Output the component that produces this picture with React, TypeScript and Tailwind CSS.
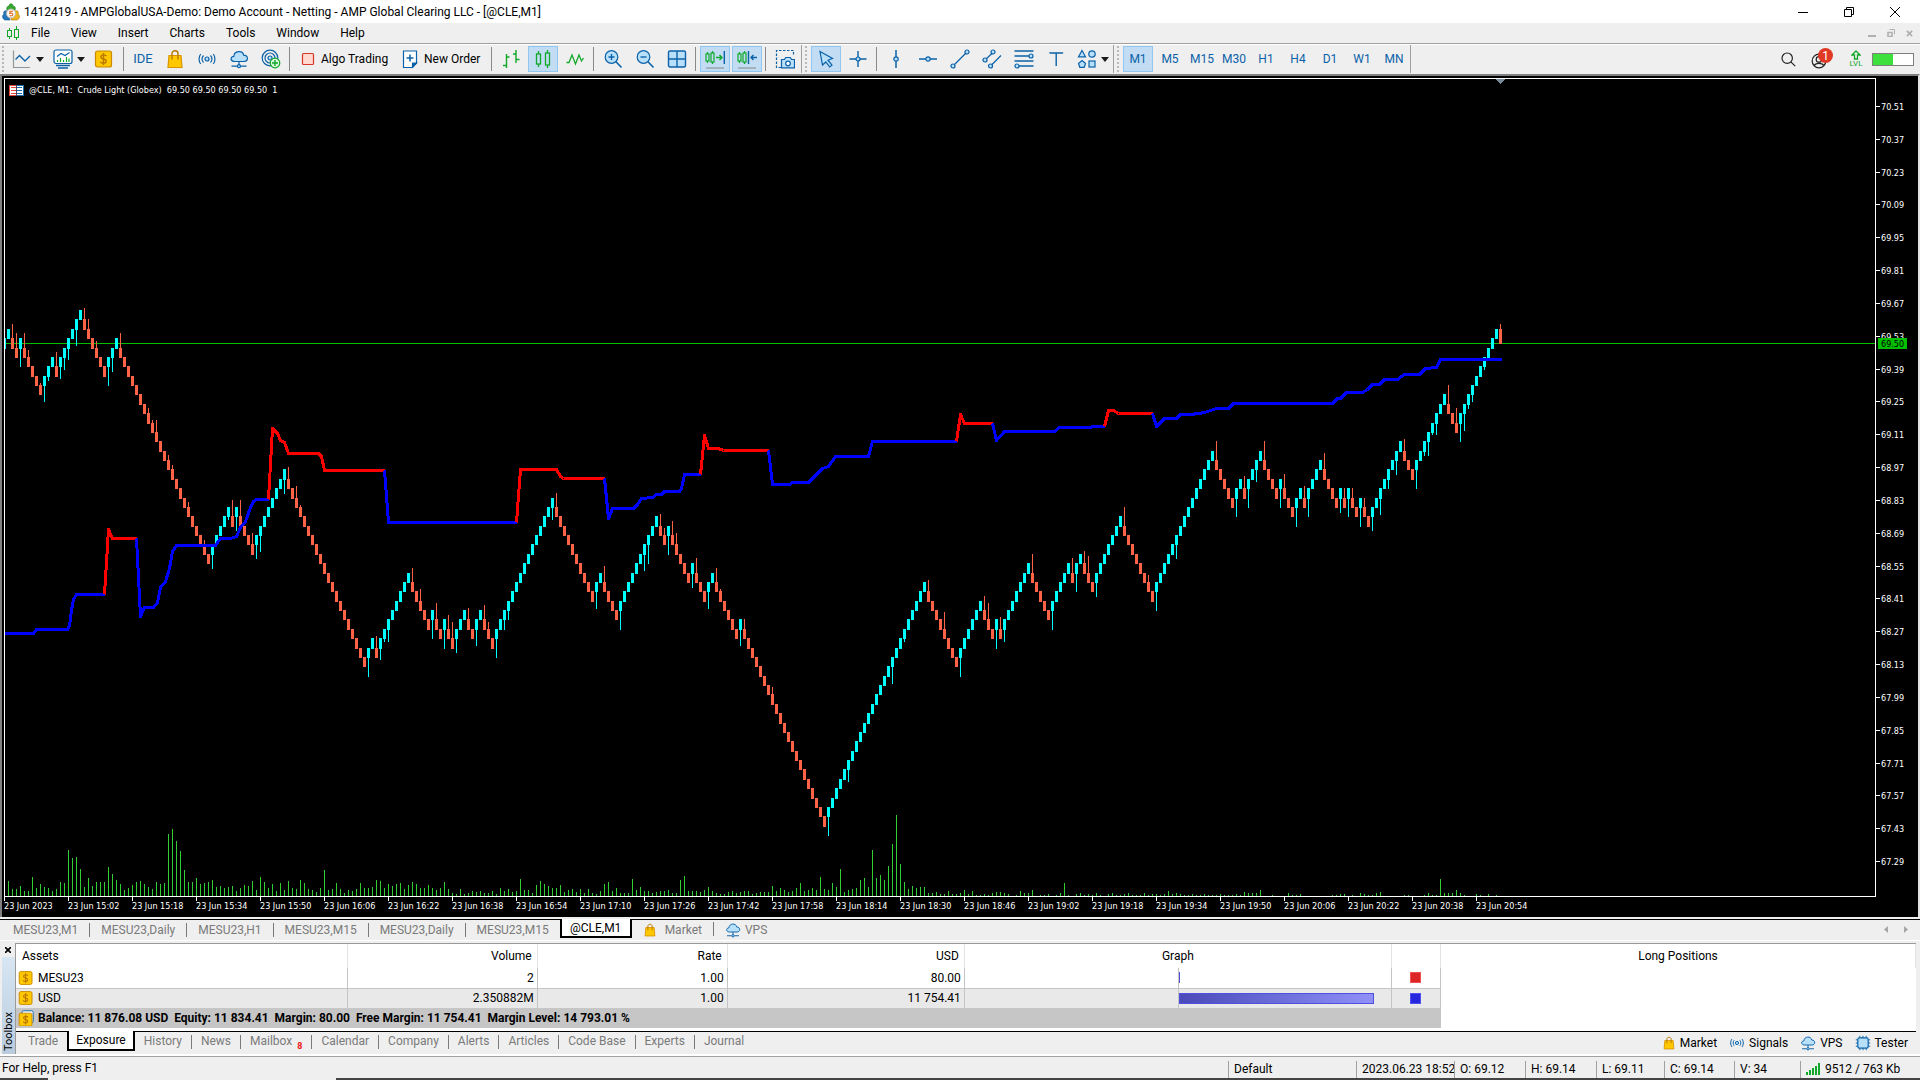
import type { ReactNode } from "react";
import { clsx } from "clsx";

const PLOT_LEFT = 5;
const PLOT_TOP = 79;
const BASELINE = 896;
const STEP = 4;

// Brick runs after the first candle: up, down, up, down...
const RUNS = [
  1, 2, 1, 5, 3, 1, 6, 6, 3, 23, 5, 1, 1, 4, 8, 20, 2, 1, 8, 5, 1, 2, 1, 2, 3, 2, 2, 3, 15, 10, 2, 4, 10, 2, 1, 5, 1, 3,
  2, 6, 1, 21, 25, 8, 6, 3, 1, 1, 7, 5, 5, 1, 2, 3, 7, 8, 15, 5, 2, 1, 4, 4, 1, 3, 2, 1, 4, 4, 1, 1, 1, 2, 1, 2, 8, 3, 8,
  3, 10,
];

// Where the wick of the candle at x ends.
const WICKS: Record<number, number> = {
  12: 324, 16: 333, 20: 367, 24: 333, 28: 350, 40: 383, 44: 402, 48: 381, 56: 352, 60: 379, 64: 370, 68: 360, 76: 346,
  84: 308, 88: 319, 96: 341, 108: 386, 112: 372, 120: 333, 148: 408, 152: 420, 156: 420, 168: 455, 172: 465, 188: 502,
  204: 540, 212: 569, 228: 520, 232: 500, 236: 531, 240: 500, 252: 533, 256: 559, 260: 552, 284: 494, 288: 467, 296: 486,
  300: 505, 368: 677, 376: 636, 380: 660, 384: 642, 388: 642, 412: 568, 420: 589, 432: 639, 436: 603, 444: 649, 448: 615,
  452: 622, 456: 653, 468: 608, 476: 646, 484: 605, 488: 622, 496: 658, 504: 630, 508: 620, 552: 520, 556: 493, 596: 609,
  604: 566, 620: 630, 644: 571, 648: 564, 660: 514, 664: 528, 668: 555, 672: 521, 676: 533, 692: 588, 696: 558, 708: 609,
  716: 568, 720: 589, 740: 646, 744: 619, 772: 687, 828: 836, 848: 782, 892: 684, 904: 642, 928: 580, 944: 612, 960: 677,
  984: 596, 988: 603, 996: 649, 1000: 617, 1004: 642, 1032: 554, 1052: 630, 1072: 558, 1076: 592, 1084: 551, 1088: 556,
  1096: 597, 1124: 507, 1148: 575, 1156: 611, 1176: 559, 1216: 441, 1236: 517, 1244: 476, 1248: 508, 1256: 482, 1264: 441,
  1280: 508, 1284: 474, 1296: 527, 1304: 486, 1308: 517, 1324: 453, 1340: 513, 1344: 488, 1348: 517, 1352: 488, 1360: 527,
  1364: 498, 1372: 531, 1380: 515, 1388: 489, 1396: 475, 1404: 439, 1416: 489, 1424: 456, 1428: 456, 1432: 435, 1436: 435,
  1448: 385, 1456: 408, 1460: 442, 1464: 431, 1468: 409, 1472: 402, 1484: 370,
};

const VOLUMES = [
  15, 7, 7, 10, 5, 5, 19, 8, 12, 9, 8, 5, 7, 14, 13, 46, 38, 39, 27, 9, 18, 10, 14, 14, 14, 29, 22, 16, 12, 6, 8, 11, 14,
  15, 12, 9, 7, 14, 12, 13, 62, 67, 55, 45, 26, 14, 14, 18, 12, 13, 14, 16, 9, 10, 8, 9, 10, 5, 8, 11, 10, 15, 6, 19, 14,
  8, 12, 5, 13, 6, 15, 8, 7, 16, 13, 7, 6, 4, 8, 26, 6, 7, 13, 7, 3, 6, 5, 7, 13, 8, 8, 9, 16, 15, 8, 12, 10, 12, 13, 7,
  11, 14, 12, 8, 8, 11, 8, 6, 8, 14, 7, 3, 2, 7, 2, 3, 5, 4, 5, 3, 3, 5, 2, 8, 5, 7, 4, 5, 17, 6, 6, 3, 11, 15, 12, 10,
  8, 8, 11, 4, 6, 7, 4, 7, 3, 7, 3, 2, 5, 12, 14, 5, 8, 3, 3, 3, 17, 6, 9, 5, 5, 3, 4, 5, 5, 6, 3, 3, 16, 20, 5, 5, 5, 4,
  6, 9, 5, 3, 2, 2, 4, 5, 3, 4, 5, 5, 2, 3, 4, 4, 4, 10, 5, 8, 6, 4, 5, 8, 13, 5, 6, 8, 6, 19, 7, 6, 13, 9, 27, 4, 6, 7,
  8, 16, 18, 9, 46, 18, 21, 16, 30, 52, 81, 32, 14, 7, 10, 8, 9, 9, 3, 3, 4, 2, 2, 5, 2, 2, 3, 6, 2, 5, 1, 1, 2, 1, 3, 4,
  4, 3, 2, 0, 1, 5, 3, 3, 6, 0, 1, 1, 2, 0, 1, 3, 13, 1, 0, 2, 3, 1, 2, 1, 3, 1, 0, 2, 3, 1, 1, 2, 3, 1, 1, 1, 3, 1, 2,
  2, 1, 2, 5, 2, 3, 2, 1, 1, 2, 1, 1, 2, 1, 1, 1, 2, 1, 1, 1, 2, 1, 4, 3, 3, 3, 6, 0, 0, 1, 0, 0, 0, 3, 1, 1, 2, 0, 0,
  0, 0, 0, 0, 0, 1, 1, 2, 2, 0, 1, 0, 3, 2, 1, 1, 3, 4, 0, 0, 0, 0, 0, 1, 1, 0, 0, 0, 1, 3, 1, 1, 17, 3, 3, 3, 6, 3, 1,
  0, 0, 2, 1, 0, 2, 0, 1,
];

const TREND: { color: string; points: string }[] = [
  { color: "#0000ff", points: "4,633 33,633 36,629 67,629 69,625 71,610 73,599 76,594 104,594" },
  { color: "#ff0000", points: "104,594 108,529 112,538 136,538" },
  {
    color: "#0000ff",
    points:
      "136,538 140,616 144,607 153,607 157,602 160,587 165,581 169,568 172,551 176,545 215,545 220,538 230,538 236,536 240,527 245,521 250,507 253,501 256,499 268,499",
  },
  { color: "#ff0000", points: "268,499 272,428 277,433 280,440 284,442 288,453 318,453 321,456 324,470 384,470" },
  { color: "#0000ff", points: "384,470 388,522 516,522" },
  { color: "#ff0000", points: "516,522 520,469 556,469 560,476 563,478 604,478" },
  {
    color: "#0000ff",
    points:
      "604,478 608,518 612,508 633,508 637,504 641,498 652,497 656,494 661,494 664,491 679,491 681,488 684,474 700,474",
  },
  { color: "#ff0000", points: "700,474 704,435 708,448 718,448 723,450 768,450" },
  {
    color: "#0000ff",
    points: "768,450 772,484 789,484 792,482 808,482 812,478 822,468 828,466 835,456 868,456 872,441 956,441",
  },
  { color: "#ff0000", points: "956,441 960,414 964,423 992,423" },
  { color: "#0000ff", points: "992,423 996,440 1004,431 1054,431 1059,427 1090,427 1092,426 1104,426" },
  { color: "#ff0000", points: "1104,426 1108,410 1113,410 1118,413 1152,413" },
  {
    color: "#0000ff",
    points:
      "1152,413 1156,426 1164,418 1176,418 1180,414 1190,414 1198,413 1204,412 1210,410 1216,408 1228,408 1233,403 1332,403 1337,398 1340,398 1346,392 1362,392 1367,389 1372,384 1379,384 1384,379 1397,379 1404,374 1419,374 1425,368 1436,367 1440,359 1501,359",
  },
];

const levelY = (level: number) => Math.round(310 + 9.376 * level);

const CANDLES = (() => {
  const out = [{ x: STEP, level: 3, up: true }];
  let level = 3;
  let x = STEP;
  RUNS.forEach((count, i) => {
    const up = i % 2 === 0;
    for (let n = 0; n < count; n++) {
      x += STEP;
      level += up ? -1 : 1;
      out.push({ x, level, up });
    }
  });
  return out;
})();

const PRICES = Array.from({ length: 24 }, (_, i) => ({
  label: (70.51 - i * 0.14).toFixed(2),
  y: Math.round(106 + i * 32.83),
}));

const TIMES = Array.from({ length: 24 }, (_, i) => {
  if (i === 0) return "23 Jun 2023";
  const minutes = 15 * 60 + 2 + (i - 1) * 16;
  return `23 Jun ${Math.floor(minutes / 60)}:${String(minutes % 60).padStart(2, "0")}`;
});

/* ---------- icons ---------- */

const BLUE = "#0b62a8";
const SKY = "#b9e0fb";
const GREEN = "#12a82a";

function Icon({ children, className = "size-5" }: { children: ReactNode; className?: string }) {
  return (
    <svg viewBox="0 0 20 20" className={clsx("shrink-0", className)} fill="none" stroke={BLUE} strokeWidth="1.2" aria-hidden="true">
      {children}
    </svg>
  );
}

function Caret() {
  return (
    <svg viewBox="0 0 8 5" className="h-[5px] w-2 shrink-0" aria-hidden="true">
      <path d="M0 0h8L4 5z" fill="#1a1a1a" />
    </svg>
  );
}

function LogoIcon() {
  return (
    <svg viewBox="0 0 18 18" className="size-[18px] shrink-0" aria-hidden="true">
      <path d="M5 7c-1-3 1-4 2-4 0-3 4-3 4 0 2 0 3 2 2 4z" fill="#36a832" stroke="#1f7d22" strokeWidth=".6" />
      <path d="M6 8C2 7 1 9 2 11c-2 1-2 5 1 6h5z" fill="#2478bd" stroke="#14538a" strokeWidth=".6" />
      <path d="M12 8c4-1 5 1 4 3 2 1 2 5-1 6h-6z" fill="#f0b41c" stroke="#a87508" strokeWidth=".6" />
      <circle cx="9" cy="10.500" r="4.500" fill="#fff" stroke="#b9b2a4" />
      <path d="M11 8.200H8l-.3 2.200c2-.6 3.300 0 3.100 1.200-.2 1.300-2 1.600-3.200.8" fill="none" stroke="#e06a1c" strokeWidth="1.100" />
    </svg>
  );
}

function CandleIcon({ className }: { className?: string }) {
  return (
    <Icon className={className}>
      <g stroke={GREEN} strokeWidth="1.300">
        <path d="M5.500 2v3M5.500 15v3M14.500 1v3M14.500 16v3" />
        <rect x="3.500" y="5" width="4" height="10" />
        <rect x="12.500" y="4" width="4" height="12" />
      </g>
    </Icon>
  );
}

function MenuCandles() {
  return (
    <svg viewBox="0 0 14 15" className="mr-[5px] ml-[6px] h-[15px] w-[14px]" fill="none" stroke={GREEN} aria-hidden="true">
      <path d="M3.500 2v2M3.500 11v2M10.500 0v3M10.500 12v2" />
      <rect x="1.500" y="4.500" width="4" height="6" />
      <rect x="8.500" y="3.500" width="4" height="8" />
    </svg>
  );
}

function DollarIcon({ className, stacked = false }: { className?: string; stacked?: boolean }) {
  return (
    <Icon className={className}>
      {stacked && <rect x="5" y="1" width="14" height="15" rx="2" fill="#fff" />}
      <rect x="1.500" y={stacked ? 4 : 2} width="16" height="16" rx="2" fill="#ffc800" stroke="#c98a00" />
      <g transform={stacked ? "translate(0 2)" : undefined} stroke="#b87800" strokeWidth="1.400">
        <path d="M12.500 7.200c-.6-1-1.600-1.300-3-1.300-3.300 0-3.600 3.500 0 4.100 3.800.6 3.400 4.200 0 4.200-1.500 0-2.600-.5-3.100-1.500M9.500 4v12" />
      </g>
    </Icon>
  );
}

function BagIcon({ className }: { className?: string }) {
  return (
    <Icon className={className}>
      <path d="M4 6.500h12l1 12H3z" fill="#ffc800" stroke="#d99400" />
      <path d="M7 10.500V4.500c0-3.600 6-3.600 6 0v6" stroke="#b87800" strokeWidth="1.400" />
    </Icon>
  );
}

function SignalIcon({ className }: { className?: string }) {
  return (
    <Icon className={className}>
      <circle cx="10" cy="10" r="2" fill={SKY} />
      <path d="M6.500 6.500c-1.700 2-1.700 5 0 7M13.500 6.500c1.700 2 1.700 5 0 7M3.700 5c-2.200 2.800-2.200 7.200 0 10M16.300 5c2.200 2.800 2.200 7.200 0 10" />
    </Icon>
  );
}

function CloudIcon({ className }: { className?: string }) {
  return (
    <Icon className={className}>
      <path d="M5.500 12.500c-4.500-.2-4.500-5-.6-5.200C5 1.500 14 1 14.600 6.200c5 .2 5 6 .6 6.300z" fill={SKY} />
      <path d="M10 12.500V16M2.500 17.200h5.700M11.800 17.200h5.700" />
      <circle cx="10" cy="17.200" r="1.500" fill={SKY} />
    </Icon>
  );
}

function RadarIcon() {
  return (
    <Icon>
      <circle cx="9" cy="9" r="7.800" />
      <circle cx="9" cy="9" r="5" />
      <circle cx="9" cy="9" r="2" fill={SKY} />
      <circle cx="14" cy="14" r="4.800" fill="#d9f7dc" stroke={GREEN} />
      <path d="M14 11v6M11 14h6" stroke={GREEN} strokeWidth="1.400" />
    </Icon>
  );
}

function MagnifierIcon({ plus = false }: { plus?: boolean }) {
  return (
    <Icon>
      <circle cx="8.500" cy="8" r="6.300" fill={SKY} />
      <path d="M13 12.700l5.500 5.800" strokeWidth="1.600" />
      <path d={plus ? "M5.500 8h6M8.500 5v6" : "M5.500 8h6"} strokeWidth="1.400" />
    </Icon>
  );
}

function ScrollIcon({ shift = false }: { shift?: boolean }) {
  return (
    <Icon>
      <g stroke={GREEN}>
        <path d="M2.500 3v2M2.500 12v2M7.500 2v2M7.500 13v2" />
        <rect x="1" y="5" width="3" height="7" />
        <rect x="6" y="4" width="3" height="9" />
        {!shift && <path d="M11 8.500h6M14.500 6l2.500 2.500-2.500 2.500" strokeWidth="1.400" />}
      </g>
      {shift ? (
        <path d="M11.500 2v13M20 8.500h-6M16.500 6L14 8.500l2.500 2.500" strokeWidth="1.400" />
      ) : (
        <path d="M19.300 2v13" strokeWidth="1.400" />
      )}
      <path d="M1 19h18" stroke="#8f969c" />
    </Icon>
  );
}

function TesterIcon() {
  return (
    <Icon className="size-4">
      <path d="M6 1v18M10 1v18M14 1v18M1 6h18M1 10h18M1 14h18" />
      <rect x="3.500" y="3.500" width="13" height="13" rx="2" fill={SKY} strokeWidth="1.500" />
    </Icon>
  );
}

/* ---------- toolbar ---------- */

function ToolButton({ label, active = false, children }: { label: string; active?: boolean; children: ReactNode }) {
  return (
    <button
      type="button"
      aria-label={label}
      aria-pressed={active}
      className={clsx(
        "flex h-[26px] w-[30px] shrink-0 items-center justify-center border text-[#0b62a8]",
        active ? "border-[#8fc6f2] bg-[#c1dcf3]" : "border-transparent",
      )}
    >
      {children}
    </button>
  );
}

function Separator() {
  return <div className="mr-1 ml-[3px] h-6 w-px shrink-0 bg-[#8a8a8a]" />;
}

function GroupEdge() {
  return (
    <div className="flex h-full w-[11px] shrink-0 items-center gap-[3px] pl-px">
      <div className="h-full w-px bg-[#a0a0a0]" />
      <Grip />
    </div>
  );
}

function Grip() {
  return <div className="h-[26px] border-l-2 border-dotted border-[#b8b8b8]" />;
}

const TIMEFRAMES = ["M1", "M5", "M15", "M30", "H1", "H4", "D1", "W1", "MN"];

function Toolbar() {
  return (
    <div className="flex h-[29px] items-center overflow-hidden border-t border-white bg-[#efefef]">
      <div className="w-[6px] shrink-0 pl-[2px]">
        <Grip />
      </div>
      <button type="button" aria-label="Chart type" className="flex w-[41px] shrink-0 items-center gap-1 pl-[6px]">
        <Icon>
          <path d="M1.500 1.500v17H18" stroke="#8f969c" />
          <path d="M3.500 10.500l4-4 5.500 5.500 5-5" strokeWidth="1.400" />
        </Icon>
        <Caret />
      </button>
      <button type="button" aria-label="Indicators" className="flex w-[41px] shrink-0 items-center gap-1 pl-[6px]">
        <Icon>
          <path d="M3 16.500h14M5 19h10" strokeWidth="1.400" />
          <rect x="1" y="1" width="18" height="13.500" rx="2" fill="#fff" />
          <path d="M4 7.500l4-3 4 2 4.500-3" />
          <path d="M4.500 13v-2M7.500 13V9M10.500 13v-2M13.500 13V8M16 13V9.500" stroke={GREEN} />
        </Icon>
        <Caret />
      </button>
      <button type="button" aria-label="Quotes" className="flex w-8 shrink-0 items-center justify-center">
        <DollarIcon />
      </button>
      <Separator />
      <div className="flex gap-[2px]">
        <ToolButton label="IDE">
          <span className="text-[13px]">IDE</span>
        </ToolButton>
        <ToolButton label="Market"><BagIcon /></ToolButton>
        <ToolButton label="Signals"><SignalIcon /></ToolButton>
        <ToolButton label="VPS"><CloudIcon /></ToolButton>
        <ToolButton label="Copy trading"><RadarIcon /></ToolButton>
      </div>
      <Separator />
      <button type="button" className="flex w-[101px] shrink-0 items-center gap-[3px] pl-1">
        <Icon>
          <rect x="4.500" y="4.500" width="11" height="11" rx="1" fill="#ffd9cf" stroke="#d8382c" />
        </Icon>
        Algo Trading
      </button>
      <button type="button" className="flex w-[93px] shrink-0 items-center gap-1 pl-[5px]">
        <Icon>
          <path d="M3.500 2h13v12l-4 4.500h-9z" fill="#fff" />
          <path d="M12.500 18v-4h4z" fill={BLUE} />
          <path d="M6.500 9h7M10 5.500v7" strokeWidth="1.500" />
        </Icon>
        New Order
      </button>
      <Separator />
      <div className="flex gap-[2px]">
        <ToolButton label="Bar chart">
          <Icon>
            <path d="M5.500 5v14M2 16.500h3.500M5.500 8h3M15 1v13M12 5h3M15 10.500h3.500" stroke={GREEN} strokeWidth="1.400" />
          </Icon>
        </ToolButton>
        <ToolButton label="Candlesticks" active><CandleIcon /></ToolButton>
        <ToolButton label="Line chart">
          <Icon>
            <path d="M1.500 13.500H4L7 6l3.500 9L14 6l2.500 6 2-3" stroke={GREEN} strokeWidth="1.300" />
          </Icon>
        </ToolButton>
      </div>
      <Separator />
      <div className="flex gap-[2px]">
        <ToolButton label="Zoom in"><MagnifierIcon plus /></ToolButton>
        <ToolButton label="Zoom out"><MagnifierIcon /></ToolButton>
        <ToolButton label="Tile windows">
          <Icon>
            <rect x="1.500" y="2" width="17" height="16" rx="1.500" fill={SKY} strokeWidth="1.400" />
            <path d="M10 2v16M1.500 10h17" strokeWidth="1.400" />
          </Icon>
        </ToolButton>
      </div>
      <Separator />
      <div className="flex gap-[2px]">
        <ToolButton label="Auto scroll" active><ScrollIcon /></ToolButton>
        <ToolButton label="Chart shift" active><ScrollIcon shift /></ToolButton>
      </div>
      <Separator />
      <ToolButton label="Screenshot">
        <Icon>
          <path d="M6 18.500H1.500v-17h17V7" strokeDasharray="2.500 1.500" />
          <path d="M6.500 10.500h3l1.200-2h4.600l1.200 2h3v8.300h-13z" fill={SKY} />
          <circle cx="13" cy="14.500" r="2.300" fill="#fff" />
        </Icon>
      </ToolButton>
      <GroupEdge />
      <div className="flex gap-[2px]">
        <ToolButton label="Cursor" active>
          <Icon>
            <path d="M4 2.500l12.500 7-4.500 1.700 4 5-2.300 1.800-3.800-5L6.500 16z" fill={SKY} />
          </Icon>
        </ToolButton>
        <ToolButton label="Crosshair">
          <Icon>
            <path d="M10 2v16M1.500 10h17" strokeWidth="1.400" />
            <circle cx="10" cy="10" r="2" fill={SKY} />
          </Icon>
        </ToolButton>
      </div>
      <Separator />
      <div className="flex gap-[2px]">
        <ToolButton label="Vertical line">
          <Icon>
            <path d="M10 1v18" strokeWidth="1.500" />
            <circle cx="10" cy="10" r="2.200" fill={SKY} />
          </Icon>
        </ToolButton>
        <ToolButton label="Horizontal line">
          <Icon>
            <path d="M1 10h18" strokeWidth="1.500" />
            <circle cx="10" cy="10" r="2.200" fill={SKY} />
          </Icon>
        </ToolButton>
        <ToolButton label="Trend line">
          <Icon>
            <path d="M3 17L17 3" />
            <circle cx="3" cy="17" r="2" fill={SKY} />
            <circle cx="17" cy="3" r="2" fill={SKY} />
          </Icon>
        </ToolButton>
        <ToolButton label="Channel">
          <Icon>
            <path d="M3 11l8.500-8M8.500 17L19 6.500" />
            <circle cx="3" cy="11" r="2" fill={SKY} />
            <circle cx="11" cy="3" r="2" fill={SKY} />
            <circle cx="8.500" cy="17" r="2" fill={SKY} />
          </Icon>
        </ToolButton>
        <ToolButton label="Fibonacci">
          <Icon>
            <path d="M.500 2h19M.500 7h15M.500 12h19M5 17h14.500" strokeWidth="1.400" />
            <circle cx="17" cy="7" r="2" fill={SKY} />
            <circle cx="3" cy="17" r="2" fill={SKY} />
          </Icon>
        </ToolButton>
        <ToolButton label="Text">
          <Icon>
            <path d="M4 4.500V4h12.500v.5M10.200 4v13" strokeWidth="1.400" />
          </Icon>
        </ToolButton>
        <button type="button" aria-label="Shapes" className="flex w-[39px] shrink-0 items-center gap-1 pl-1">
          <Icon>
            <path d="M5 1.500l3.500 6.300h-7z" fill={SKY} />
            <circle cx="15" cy="5" r="3.200" fill={SKY} />
            <path d="M5 11.500l3.500 3-1.300 3.800H2.800l-1.300-3.800z" fill={SKY} />
            <rect x="12" y="12" width="6" height="6" fill={SKY} />
          </Icon>
          <Caret />
        </button>
      </div>
      <GroupEdge />
      <div className="flex gap-[2px]">
        {TIMEFRAMES.map((tf) => (
          <ToolButton key={tf} label={tf} active={tf === "M1"}>
            {tf}
          </ToolButton>
        ))}
      </div>
      <div className="ml-px h-full w-px shrink-0 bg-[#a0a0a0]" />
      <div className="ml-auto flex items-center gap-2 pr-[6px]">
        <button type="button" aria-label="Search" className="flex w-[30px] justify-center">
          <Icon className="size-4">
            <g stroke="#222" strokeWidth="1.500">
              <circle cx="9" cy="9" r="6.500" />
              <path d="M13.500 13.500L19 19" />
            </g>
          </Icon>
        </button>
        <button type="button" aria-label="Account" className="relative h-6 w-[29px]">
          <Icon className="mt-1 size-4">
            <g stroke="#222" strokeWidth="1.500">
              <circle cx="10" cy="10" r="8.500" />
              <circle cx="10" cy="8" r="3.500" />
              <path d="M4 16c1.500-4 10.500-4 12 0" />
            </g>
          </Icon>
          <span className="absolute top-px left-[7px] flex size-[15px] items-center justify-center rounded-full bg-[#e03a24] text-[12px] text-white">
            1
          </span>
        </button>
        <div className="flex w-4 flex-col items-center text-[#12a82a]">
          <svg viewBox="0 0 10 10" className="size-[10px]" fill="none" stroke={GREEN} strokeWidth="1.300" aria-hidden="true">
            <path d="M5 1l4 4H6.500v4h-3V5H1z" />
          </svg>
          <span className="text-[8px] leading-[8px]">LVL</span>
        </div>
        <div className="h-[13px] w-[42px] border border-[#7f7f7f] bg-white">
          <div className="h-full w-5 bg-[#3ee03e]" />
        </div>
      </div>
    </div>
  );
}

/* ---------- chart ---------- */

function Plot() {
  return (
    <div className="relative min-w-0 flex-1 border border-white">
      <div className="absolute top-[4px] left-1 flex items-center gap-[5px] font-['DejaVu_Sans_Condensed','DejaVu_Sans',sans-serif] text-[9px] leading-[14px] whitespace-pre text-white">
        <svg viewBox="0 0 15 11" className="h-[11px] w-[15px]" aria-hidden="true">
          <path d="M0 0h7.500v11H0z" fill="#e0443a" />
          <path d="M7.500 0H15v11H7.500z" fill="#1769aa" />
          <path d="M1 1h6v9H1zM8 1h6v9H8z" fill="#fff" />
          <path d="M2 2.500h5M2 5.500h5M2 8.500h5" stroke="#e0443a" />
          <path d="M8 2.500h5M8 5.500h5M8 8.500h5" stroke="#1769aa" />
        </svg>
        {"@CLE, M1:  Crude Light (Globex)  69.50 69.50 69.50 69.50  1"}
      </div>
      <svg className="block h-[817px] w-full" shapeRendering="crispEdges" role="img" aria-label="@CLE, M1 price and volume">
        <line x1="0" x2="100%" y1="264.500" y2="264.500" stroke="#00c000" />
        <g transform={`translate(${-PLOT_LEFT} ${-PLOT_TOP})`}>
          <path d="M1495 79h11l-5.500 5z" fill="#778899" />
          {VOLUMES.map((h, i) => (
            <rect key={i} x={8 + i * STEP} y={BASELINE - h} width="1" height={h} fill="#32cd32" />
          ))}
          {CANDLES.map(({ x, level, up }) => {
            const top = levelY(level);
            const bottom = levelY(level + 1) + 1;
            const wick = WICKS[x];
            return (
              <g key={x} fill={up ? "#00ffff" : "#ff6347"}>
                <rect x={x - 1} y={top} width="3" height={bottom - top} />
                {wick && <rect x={x} y={up ? bottom : wick} width="1" height={up ? wick - bottom : top - wick} />}
              </g>
            );
          })}
          <path d="M1499 329h3v15h-3zM1500 324h1v5h-1z" fill="#ff6347" />
          <g transform="translate(0.5 0.5)" fill="none" strokeWidth="3" strokeLinejoin="round">
            {TREND.map((seg, i) => (
              <polyline key={i} points={seg.points} stroke={seg.color} />
            ))}
          </g>
        </g>
      </svg>
    </div>
  );
}

function PriceAxis() {
  return (
    <svg className="h-[819px] w-[42px] shrink-0 font-['DejaVu_Sans_Condensed','DejaVu_Sans',sans-serif] text-[9px]" aria-label="Price scale">
      <g transform="translate(0 -78)" fill="#fff">
        {PRICES.map(({ label, y }) => (
          <g key={label}>
            <rect x="0" y={y} width="4" height="1" />
            <text x="5" y={y + 4}>{label}</text>
          </g>
        ))}
        <rect x="2" y="338" width="29" height="11" fill="#00c000" />
        <text x="5" y="347" fill="#000">69.50</text>
      </g>
    </svg>
  );
}

function Chart() {
  return (
    <div className="border-t-2 border-r-2 border-l-2 border-t-[#808080] border-r-[#e3e3e3] border-l-[#808080] bg-black pt-[2px] pl-[2px]">
      <div className="flex">
        <Plot />
        <PriceAxis />
      </div>
      <div className="flex h-5 overflow-hidden font-['DejaVu_Sans_Condensed','DejaVu_Sans',sans-serif] text-[9px] leading-[10px] text-white">
        {TIMES.map((t) => (
          <div key={t} className="w-16 shrink-0 whitespace-nowrap">
            <div className="h-1 w-px bg-white" />
            {t}
          </div>
        ))}
      </div>
    </div>
  );
}

const CHART_TABS = ["MESU23,M1", "MESU23,Daily", "MESU23,H1", "MESU23,M15", "MESU23,Daily", "MESU23,M15"];

function ChartTabs() {
  return (
    <div className="mt-[2px] flex h-5 items-start border-t border-black pl-[2px] text-[#7a7a7a]">
      {CHART_TABS.map((tab, i) => (
        <div key={i} className="flex items-center">
          <button type="button" className="h-[19px] px-[11px]">{tab}</button>
          {i < CHART_TABS.length - 1 && <div className="h-[14px] w-px bg-[#7a7a7a]" />}
        </div>
      ))}
      <button type="button" className="-mt-px h-[19px] w-[72px] border-2 border-t-0 border-black bg-white text-black">@CLE,M1</button>
      <button type="button" className="flex h-[19px] items-center gap-2 px-[11px]">
        <BagIcon className="size-[14px]" />
        Market
      </button>
      <div className="mt-[2px] h-[14px] w-px bg-[#7a7a7a]" />
      <button type="button" className="flex h-[19px] items-center gap-1 px-[11px]">
        <CloudIcon className="size-4" />
        VPS
      </button>
      <div className="ml-auto flex h-[19px] items-center gap-4 pr-3">
        <button type="button" aria-label="Scroll tabs left">
          <svg viewBox="0 0 4 7" className="h-[7px] w-1" aria-hidden="true"><path d="M4 0v7L0 3.500z" fill="#a6a6a6" /></svg>
        </button>
        <button type="button" aria-label="Scroll tabs right">
          <svg viewBox="0 0 4 7" className="h-[7px] w-1" aria-hidden="true"><path d="M0 0v7l4-3.500z" fill="#a6a6a6" /></svg>
        </button>
      </div>
    </div>
  );
}

/* ---------- toolbox ---------- */

const ASSETS = [
  { name: "MESU23", volume: "2", rate: "1.00", usd: "80.00", bar: 1, dot: "bg-[#dc2626] border-[#f05050]" },
  { name: "USD", volume: "2.350882M", rate: "1.00", usd: "11 754.41", bar: 195, dot: "bg-[#2626dc] border-[#5050f0]" },
];

const TOOLBOX_TABS = [
  "Trade", "Exposure", "History", "News", "Mailbox", "Calendar", "Company", "Alerts", "Articles", "Code Base", "Experts", "Journal",
];

function ExposureTable() {
  return (
    <table className="w-3/4 table-fixed border-collapse">
      <colgroup>
        <col className="w-[331px]" />
        <col className="w-[190px]" />
        <col className="w-[190px]" />
        <col className="w-[237px]" />
        <col className="w-[214px]" />
        <col className="w-[213px]" />
        <col className="w-[49px]" />
      </colgroup>
      <thead>
        <tr className="h-6 [&>th]:border-r [&>th]:border-[#e4e4e4] [&>th]:p-0 [&>th]:font-normal">
          <th scope="col" className="text-left"><span className="pl-[6px]">Assets</span></th>
          <th scope="col" className="text-right"><span className="pr-[5px]">Volume</span></th>
          <th scope="col" className="text-right"><span className="pr-[5px]">Rate</span></th>
          <th scope="col" className="text-right"><span className="pr-[5px]">USD</span></th>
          <th scope="col" colSpan={2}>Graph</th>
          <th scope="col" aria-label="Color" />
        </tr>
      </thead>
      <tbody>
        {ASSETS.map((asset, i) => (
          <tr
            key={asset.name}
            className={clsx("h-5 [&>td]:border-r [&>td]:border-[#c4c4c4] [&>td]:p-0", i === 0 ? "border-b border-[#c4c4c4]" : "bg-[#e9e9e9]")}
          >
            <td>
              <div className="flex items-center gap-1 pl-[2px]">
                <DollarIcon className="size-4" />
                {asset.name}
              </div>
            </td>
            <td className="text-right"><span className="pr-[3px]">{asset.volume}</span></td>
            <td className="text-right"><span className="pr-[3px]">{asset.rate}</span></td>
            <td className="text-right"><span className="pr-[3px]">{asset.usd}</span></td>
            <td />
            <td>
              {asset.bar > 1 ? (
                <div
                  className="h-[11px] border border-[#5050e0] bg-linear-to-r from-[#4a4ab8] to-[#9090f8]"
                  style={{ width: asset.bar }}
                />
              ) : (
                <div className="h-[11px] w-px bg-[#5050e0]" />
              )}
            </td>
            <td><div className={clsx("mx-auto size-[11px] border", asset.dot)} /></td>
          </tr>
        ))}
        <tr className="h-5 bg-[#c6c6c6]">
          <td colSpan={7} className="p-0 font-bold">
            <div className="flex items-center gap-1 pl-[2px] whitespace-pre">
              <DollarIcon className="size-4" stacked />
              {"Balance: 11 876.08 USD  Equity: 11 834.41  Margin: 80.00  Free Margin: 11 754.41  Margin Level: 14 793.01 %"}
            </div>
          </td>
        </tr>
      </tbody>
    </table>
  );
}

function ToolboxTabs() {
  return (
    <div className="flex h-[22px] items-start border-t border-black pl-[3px] text-[#7a7a7a]">
      {TOOLBOX_TABS.map((tab, i) => {
        const active = tab === "Exposure";
        return (
          <div key={tab} className="flex items-start">
            <button
              type="button"
              className={clsx(
                "leading-[16px]",
                active ? "-mt-px h-5 border-2 border-t-0 border-black bg-white px-[7px] text-black" : "h-[18px] px-[9px]",
              )}
            >
              {tab}
              {tab === "Mailbox" && (
                <span className="relative top-1 ml-[5px] text-[9px] leading-none font-bold text-[#f01818]">8</span>
              )}
            </button>
            {i > 1 && i < TOOLBOX_TABS.length - 1 && <div className="mt-[3px] h-[14px] w-px bg-[#7a7a7a]" />}
          </div>
        );
      })}
      <div className="ml-auto flex items-center gap-3 pt-[3px] pr-2 text-black [&>a]:flex [&>a]:items-center [&>a]:gap-1">
        <a href="#market"><BagIcon className="size-[14px]" />Market</a>
        <a href="#signals"><SignalIcon className="size-4" />Signals</a>
        <a href="#vps"><CloudIcon className="size-4" />VPS</a>
        <a href="#tester"><TesterIcon />Tester</a>
      </div>
    </div>
  );
}

function Toolbox() {
  return (
    <div className="mt-[2px] flex h-[111px]">
      <div className="flex w-[15px] shrink-0 flex-col items-center pl-px">
        <button type="button" aria-label="Close toolbox" className="flex h-[14px] w-full items-center justify-center">
          <svg viewBox="0 0 6 6" className="size-[6px]" aria-hidden="true">
            <path d="M0 0l6 6M6 0L0 6" stroke="#000" strokeWidth="1.600" />
          </svg>
        </button>
        <div className="flex w-[13px] flex-1 flex-col items-center justify-end bg-linear-to-b from-[#d8e6f3] to-[#b9cbdd] pb-[3px]">
          <span className="rotate-180 text-[11px] leading-[13px] [writing-mode:vertical-rl]">Toolbox</span>
        </div>
      </div>
      <div className="mr-1 flex min-w-0 flex-1 flex-col border-t border-l border-[#9a9a9a]">
        <div className="flex h-[87px] items-start bg-white">
          <ExposureTable />
          <div className="flex h-6 flex-1 items-center justify-center border-r border-[#e4e4e4]">Long Positions</div>
        </div>
        <ToolboxTabs />
      </div>
    </div>
  );
}

/* ---------- window ---------- */

const MENU = ["File", "View", "Insert", "Charts", "Tools", "Window", "Help"];

const STATUS = [
  { text: "Default", width: "w-[128px]" },
  { text: "2023.06.23 18:52", width: "w-[98px]" },
  { text: "O: 69.12", width: "w-[71px]" },
  { text: "H: 69.14", width: "w-[71px]" },
  { text: "L: 69.11", width: "w-[68px]" },
  { text: "C: 69.14", width: "w-[70px]" },
  { text: "V: 34", width: "w-[66px]" },
];

export default function App() {
  return (
    <div className="flex min-h-screen flex-col bg-[#efefef] font-[Roboto,sans-serif] text-[12px] leading-[16px] text-black">
      <header className="flex h-[23px] items-center gap-1 bg-white pl-[2px]">
        <LogoIcon />
        <h1>1412419 - AMPGlobalUSA-Demo: Demo Account - Netting - AMP Global Clearing LLC - [@CLE,M1]</h1>
        <div className="ml-auto flex items-center gap-9 pr-5">
          <button type="button" aria-label="Minimize">
            <svg viewBox="0 0 10 10" className="size-[10px]" aria-hidden="true"><path d="M0 5.500h10" stroke="#000" /></svg>
          </button>
          <button type="button" aria-label="Restore">
            <svg viewBox="0 0 10 10" className="size-[10px]" fill="none" stroke="#000" aria-hidden="true">
              <path d="M.500 2.500h7v7h-7zM2.500 2.500v-2h7v7h-2" />
            </svg>
          </button>
          <button type="button" aria-label="Close">
            <svg viewBox="0 0 10 10" className="size-[10px]" aria-hidden="true"><path d="M0 0l10 10M10 0L0 10" stroke="#000" /></svg>
          </button>
        </div>
      </header>

      <nav className="flex h-[21px] items-center border-b border-[#a0a0a0]">
        <MenuCandles />
        {MENU.map((item) => (
          <button key={item} type="button" className="mr-[9px] px-[6px]">
            {item}
          </button>
        ))}
        <div className="ml-auto flex items-center gap-[11px] pr-[7px]">
          <button type="button" aria-label="Minimize chart">
            <svg viewBox="0 0 8 8" className="size-2" aria-hidden="true"><path d="M0 7h8" stroke="#b0b0b0" strokeWidth="2" /></svg>
          </button>
          <button type="button" aria-label="Restore chart">
            <svg viewBox="0 0 8 8" className="size-2" fill="none" stroke="#b0b0b0" aria-hidden="true">
              <path d="M1 3.500h4v4H1z" strokeWidth="1.600" />
              <path d="M2.500.500h5v5" />
            </svg>
          </button>
          <button type="button" aria-label="Close chart">
            <svg viewBox="0 0 8 8" className="size-[7px]" aria-hidden="true"><path d="M1 1l6 6M7 1L1 7" stroke="#b0b0b0" strokeWidth="2" /></svg>
          </button>
        </div>
      </nav>

      <Toolbar />
      <div className="h-px bg-[#efefef]" />
      <Chart />
      <ChartTabs />
      <div className="mt-px h-px bg-white" />
      <Toolbox />

      <div className="border-b border-[#a0a0a0] bg-white pt-[2px]" />
      <footer className="flex h-[21px] items-center">
        <span className="min-w-0 flex-1 pl-[2px]">For Help, press F1</span>
        {STATUS.map(({ text, width }) => (
          <span key={text} className={clsx("mt-[3px] h-[17px] shrink-0 border-l border-[#a0a0a0] pl-[5px] whitespace-nowrap", width)}>
            {text}
          </span>
        ))}
        <span className="mt-[3px] flex h-[17px] w-[120px] shrink-0 items-center gap-[5px] border-l border-[#a0a0a0] pl-[5px]">
          <svg viewBox="0 0 14 12" className="h-3 w-[14px]" aria-hidden="true">
            <path d="M1 12V9M4 12V7M7 12V5M10 12V3M13 12V0" stroke={GREEN} strokeWidth="2" />
          </svg>
          9512 / 763 Kb
        </span>
      </footer>
      <div className="flex h-[2px] bg-[#444]">
        <div className="ml-12 w-72 bg-[#efefef]" />
      </div>
    </div>
  );
}
